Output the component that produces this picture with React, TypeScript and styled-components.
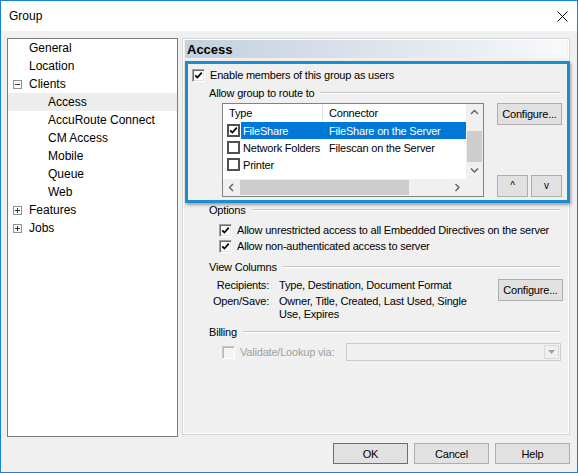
import React from "react"
import styled, { createGlobalStyle } from "styled-components"

const GlobalStyle = createGlobalStyle`
    html, body {
        margin: 0;
        padding: 0;
        background: #ffffff;
    }
`

const Window = styled.div`
    width: 578px;
    height: 473px;
    box-sizing: border-box;
    border: 1px solid #1883d7;
    background: #f0f0f0;
    display: flex;
    flex-direction: column;
    font-family: "Liberation Sans", Arial, sans-serif;
    color: #000;
    overflow: hidden;
`

const TitleBar = styled.div`
    height: 30px;
    flex: none;
    background: #ffffff;
    display: flex;
    align-items: center;
    justify-content: space-between;
    padding: 0 9px 0 8px;
    font-size: 12px;
`

const Body = styled.div`
    flex: 1;
    display: flex;
    flex-direction: column;
    padding: 7px 7px 8px 6px;
    min-height: 0;
`

const Main = styled.div`
    flex: 1;
    display: flex;
    gap: 4px;
    align-items: flex-start;
    min-height: 0;
`

const Tree = styled.div`
    width: 171px;
    height: 399px;
    box-sizing: border-box;
    border: 1px solid #7a7a7a;
    background: #ffffff;
    font-size: 12px;
    flex: none;
`

const TreeRow = styled.div<{ $level: number; $selected?: boolean }>`
    height: 18px;
    display: flex;
    align-items: center;
    padding-left: ${(p) => 5 + p.$level * 19}px;
    background: ${(p) => (p.$selected ? "#ededed" : "transparent")};
`

const ExpanderSlot = styled.span`
    width: 16px;
    flex: none;
    display: flex;
    align-items: center;
`

const Expander = styled.span`
    width: 9px;
    height: 9px;
    box-sizing: border-box;
    border: 1px solid #919191;
    display: flex;
    align-items: center;
    justify-content: center;
    background: #fff;
`

const Panel = styled.div`
    position: relative;
    flex: 1;
    height: 397px;
    box-sizing: border-box;
    border: 1px solid #d5d5d5;
    box-shadow: inset 0 0 0 1px #ffffff;
    padding: 1px 2px 2px;
    display: flex;
    flex-direction: column;
    font-size: 11px;
    letter-spacing: -0.2px;
`

const PanelHeader = styled.div`
    height: 18px;
    flex: none;
    display: flex;
    align-items: center;
    padding-left: 2px;
    font-size: 13px;
    font-weight: bold;
    letter-spacing: 0;
    background: linear-gradient(to right, #c3d0de, #dfe6ee 55%, #f8f9fb);
`

// the blue call-out frame drawn over the screenshot
const Highlight = styled.div`
    position: absolute;
    left: 2px;
    top: 22px;
    width: 385px;
    height: 142px;
    box-sizing: border-box;
    border: 3px solid #1a8ecf;
    box-shadow: 1px 2px 3px rgba(0, 0, 0, 0.35);
    pointer-events: none;
`

const CheckRow = styled.div<{ $indent: number; $top: number }>`
    height: 16px;
    display: flex;
    align-items: center;
    gap: 5px;
    margin: ${(p) => p.$top}px 0 0 ${(p) => p.$indent}px;
`

const GroupHeading = styled.div<{ $top: number }>`
    height: 14px;
    display: flex;
    align-items: center;
    margin: ${(p) => p.$top}px 7px 0 24px;

    &::after {
        content: "";
        flex: 1;
        margin-left: 6px;
        border-top: 1px solid #c4c4c4;
        border-bottom: 1px solid #ffffff;
    }
`

const ListRow = styled.div`
    display: flex;
    gap: 13px;
    margin: 3px 4px 0 37px;
`

const ListFrame = styled.div`
    width: 262px;
    height: 94px;
    flex: none;
    box-sizing: border-box;
    border: 1px solid #828282;
    background: #ffffff;
    display: grid;
    grid-template-columns: 243px 17px;
    grid-template-rows: 75px 17px;
`

const ListBody = styled.div`
    overflow: hidden;
`

const ListHeader = styled.div`
    height: 18px;
    display: grid;
    grid-template-columns: 100px 1fr;
`

const HeaderCell = styled.div<{ $divider?: boolean }>`
    display: flex;
    align-items: center;
    padding-left: 6px;
    box-sizing: border-box;
    border-right: ${(p) => (p.$divider ? "1px solid #e5e5e5" : "none")};
`

const ListItem = styled.div`
    height: 17px;
    display: flex;
    align-items: center;
    padding-left: 4px;
`

const ItemCells = styled.div<{ $selected?: boolean }>`
    flex: 1;
    height: 17px;
    margin-left: 1px;
    display: grid;
    grid-template-columns: 81px 1fr;
    align-items: center;
    white-space: nowrap;
    background: ${(p) => (p.$selected ? "#0078d7" : "transparent")};
    color: ${(p) => (p.$selected ? "#ffffff" : "#000")};

    & > span:first-child {
        padding-left: 2px;
    }
    & > span:last-child {
        padding-left: 7px;
    }
`

const VScroll = styled.div`
    background: #f0f0f0;
    display: flex;
    flex-direction: column;
`

const HScroll = styled.div`
    background: #f0f0f0;
    display: flex;
`

const ScrollArrow = styled.div`
    width: 17px;
    height: 17px;
    flex: none;
    display: flex;
    align-items: center;
    justify-content: center;
`

const ScrollTrack = styled.div<{ $vertical?: boolean }>`
    flex: 1;
    display: flex;
    flex-direction: ${(p) => (p.$vertical ? "column" : "row")};
`

const ScrollThumb = styled.div<{ $vertical?: boolean; $offset: number; $length: number }>`
    background: #cdcdcd;
    ${(p) =>
        p.$vertical
            ? `margin: ${p.$offset}px 1px 0; height: ${p.$length}px;`
            : `margin: 1px 0 1px ${p.$offset}px; width: ${p.$length}px;`}
`

const Corner = styled.div`
    background: #f0f0f0;
`

const SideButtons = styled.div`
    width: 65px;
    display: flex;
    flex-direction: column;
    justify-content: space-between;
`

const ArrowPair = styled.div`
    display: flex;
    gap: 3px;
`

const Button = styled.button<{ $width?: number; $height?: number; $default?: boolean }>`
    width: ${(p) => p.$width ?? 65}px;
    height: ${(p) => p.$height ?? 22}px;
    box-sizing: border-box;
    padding: 0;
    background: #e1e1e1;
    border: 1px solid ${(p) => (p.$default ? "#6f6f6f" : "#adadad")};
    font-family: "Liberation Sans", Arial, sans-serif;
    font-size: 11px;
    letter-spacing: -0.2px;
    color: #000;
    flex: none;
`

const ArrowButton = styled(Button)`
    font-size: 10px;
    line-height: 1;
`

const ColumnsBlock = styled.div`
    display: flex;
    align-items: flex-start;
    margin: 5px 4px 0 26px;
`

const ColumnsGrid = styled.div`
    flex: 1;
    display: grid;
    grid-template-columns: 58px auto;
    column-gap: 10px;
    row-gap: 3px;
    line-height: 13px;
`

const ColumnsKey = styled.div`
    text-align: right;
    white-space: nowrap;
`

const BillingRow = styled.div`
    height: 18px;
    display: flex;
    align-items: center;
    margin: 4px 6px 0 37px;
    color: #a0a0a0;
`

const BillingLabel = styled.span`
    flex: 1;
    margin-left: 5px;
`

const Combo = styled.div`
    width: 215px;
    height: 18px;
    box-sizing: border-box;
    border: 1px solid #cccccc;
    background: #f0f0f0;
    display: flex;
    justify-content: flex-end;
    padding: 1px;
`

const ComboButton = styled.div`
    width: 15px;
    box-sizing: border-box;
    border: 1px solid #d9d9d9;
    display: flex;
    align-items: center;
    justify-content: center;
`

const Footer = styled.div`
    display: flex;
    justify-content: flex-end;
    gap: 6px;
    margin-top: 6px;
`

const Box = styled.span<{ $variant: "classic" | "flat" | "disabled" }>`
    width: 13px;
    height: 13px;
    flex: none;
    box-sizing: border-box;
    display: flex;
    align-items: center;
    justify-content: center;
    background: ${(p) => (p.$variant === "disabled" ? "#f4f4f4" : "#ffffff")};
    ${(p) =>
        p.$variant === "flat"
            ? "border: 2px solid #505050;"
            : p.$variant === "disabled"
            ? "border: 1px solid; border-color: #c8c8c8 #ffffff #ffffff #c8c8c8; box-shadow: inset 1px 1px 0 #b8b8b8;"
            : "border: 1px solid; border-color: #a0a0a0 #ffffff #ffffff #a0a0a0; box-shadow: inset 1px 1px 0 #696969, inset -1px -1px 0 #e3e3e3;"}
`

function CheckBox({ checked, variant = "classic" }: { checked?: boolean; variant?: "classic" | "flat" | "disabled" }) {
    return (
        <Box $variant={variant}>
            {checked && (
                <svg width="9" height="9" viewBox="0 0 9 9">
                    <path d="M1.2 4.3 L3.4 6.6 L7.8 1.6" fill="none" stroke="#000" strokeWidth="1.7" />
                </svg>
            )}
        </Box>
    )
}

function Chevron({ dir }: { dir: "up" | "down" | "left" | "right" }) {
    const points = {
        up: "1,5 4.5,1.5 8,5",
        down: "1,1.5 4.5,5 8,1.5",
        left: "5,1 1.5,4.5 5,8",
        right: "1.5,1 5,4.5 1.5,8",
    }[dir]
    const vertical = dir === "up" || dir === "down"
    return (
        <svg width={vertical ? 9 : 7} height={vertical ? 7 : 9} viewBox={vertical ? "0 0 9 7" : "0 0 7 9"}>
            <polyline points={points} fill="none" stroke="#606060" strokeWidth="1.4" />
        </svg>
    )
}

const treeItems = [
    { label: "General", level: 0 },
    { label: "Location", level: 0 },
    { label: "Clients", level: 0, expander: "minus" },
    { label: "Access", level: 1, selected: true },
    { label: "AccuRoute Connect", level: 1 },
    { label: "CM Access", level: 1 },
    { label: "Mobile", level: 1 },
    { label: "Queue", level: 1 },
    { label: "Web", level: 1 },
    { label: "Features", level: 0, expander: "plus" },
    { label: "Jobs", level: 0, expander: "plus" },
]

const connectors = [
    { type: "FileShare", connector: "FileShare on the Server", checked: true, selected: true },
    { type: "Network Folders", connector: "Filescan on the Server" },
    { type: "Printer", connector: "" },
]

export default function App() {
    return (
        <>
            <GlobalStyle />
            <Window>
                <TitleBar>
                    <span>Group</span>
                    <svg width="11" height="11" viewBox="0 0 11 11">
                        <path d="M0.5 0.5 L10.5 10.5 M10.5 0.5 L0.5 10.5" stroke="#000" strokeWidth="1" />
                    </svg>
                </TitleBar>
                <Body>
                    <Main>
                        <Tree>
                            {treeItems.map((item) => (
                                <TreeRow key={item.label} $level={item.level} $selected={item.selected}>
                                    <ExpanderSlot>
                                        {item.expander && (
                                            <Expander>
                                                <svg width="7" height="7" viewBox="0 0 7 7">
                                                    <path d="M1 3.5 H6" stroke="#333" strokeWidth="1" />
                                                    {item.expander === "plus" && <path d="M3.5 1 V6" stroke="#333" strokeWidth="1" />}
                                                </svg>
                                            </Expander>
                                        )}
                                    </ExpanderSlot>
                                    <span>{item.label}</span>
                                </TreeRow>
                            ))}
                        </Tree>
                        <Panel>
                            <PanelHeader>Access</PanelHeader>
                            <CheckRow $indent={7} $top={9}>
                                <CheckBox checked />
                                <span>Enable members of this group as users</span>
                            </CheckRow>
                            <GroupHeading $top={3}>Allow group to route to</GroupHeading>
                            <ListRow>
                                <ListFrame>
                                    <ListBody>
                                        <ListHeader>
                                            <HeaderCell $divider>Type</HeaderCell>
                                            <HeaderCell>Connector</HeaderCell>
                                        </ListHeader>
                                        {connectors.map((c) => (
                                            <ListItem key={c.type}>
                                                <CheckBox checked={c.checked} variant="flat" />
                                                <ItemCells $selected={c.selected}>
                                                    <span>{c.type}</span>
                                                    <span>{c.connector}</span>
                                                </ItemCells>
                                            </ListItem>
                                        ))}
                                    </ListBody>
                                    <VScroll>
                                        <ScrollArrow>
                                            <Chevron dir="up" />
                                        </ScrollArrow>
                                        <ScrollTrack $vertical>
                                            <ScrollThumb $vertical $offset={10} $length={31} />
                                        </ScrollTrack>
                                        <ScrollArrow>
                                            <Chevron dir="down" />
                                        </ScrollArrow>
                                    </VScroll>
                                    <HScroll>
                                        <ScrollArrow>
                                            <Chevron dir="left" />
                                        </ScrollArrow>
                                        <ScrollTrack>
                                            <ScrollThumb $offset={0} $length={169} />
                                        </ScrollTrack>
                                        <ScrollArrow>
                                            <Chevron dir="right" />
                                        </ScrollArrow>
                                    </HScroll>
                                    <Corner />
                                </ListFrame>
                                <SideButtons>
                                    <Button>Configure...</Button>
                                    <ArrowPair>
                                        <ArrowButton $width={31}>^</ArrowButton>
                                        <ArrowButton $width={31}>v</ArrowButton>
                                    </ArrowPair>
                                </SideButtons>
                            </ListRow>
                            <GroupHeading $top={6}>Options</GroupHeading>
                            <CheckRow $indent={34} $top={5}>
                                <CheckBox checked />
                                <span>Allow unrestricted access to all Embedded Directives on the server</span>
                            </CheckRow>
                            <CheckRow $indent={34} $top={0}>
                                <CheckBox checked />
                                <span>Allow non-authenticated access to server</span>
                            </CheckRow>
                            <GroupHeading $top={6}>View Columns</GroupHeading>
                            <ColumnsBlock>
                                <ColumnsGrid>
                                    <ColumnsKey>Recipients:</ColumnsKey>
                                    <div>Type, Destination, Document Format</div>
                                    <ColumnsKey>Open/Save:</ColumnsKey>
                                    <div>
                                        Owner, Title, Created, Last Used, Single
                                        <br />
                                        Use, Expires
                                    </div>
                                </ColumnsGrid>
                                <Button>Configure...</Button>
                            </ColumnsBlock>
                            <GroupHeading $top={4}>Billing</GroupHeading>
                            <BillingRow>
                                <CheckBox variant="disabled" />
                                <BillingLabel>Validate/Lookup via:</BillingLabel>
                                <Combo>
                                    <ComboButton>
                                        <svg width="7" height="4" viewBox="0 0 7 4">
                                            <path d="M0 0 H7 L3.5 4 Z" fill="#a0a0a0" />
                                        </svg>
                                    </ComboButton>
                                </Combo>
                            </BillingRow>
                            <Highlight />
                        </Panel>
                    </Main>
                    <Footer>
                        <Button $width={75} $height={21} $default>
                            OK
                        </Button>
                        <Button $width={75} $height={21}>
                            Cancel
                        </Button>
                        <Button $width={75} $height={21}>
                            Help
                        </Button>
                    </Footer>
                </Body>
            </Window>
        </>
    )
}
